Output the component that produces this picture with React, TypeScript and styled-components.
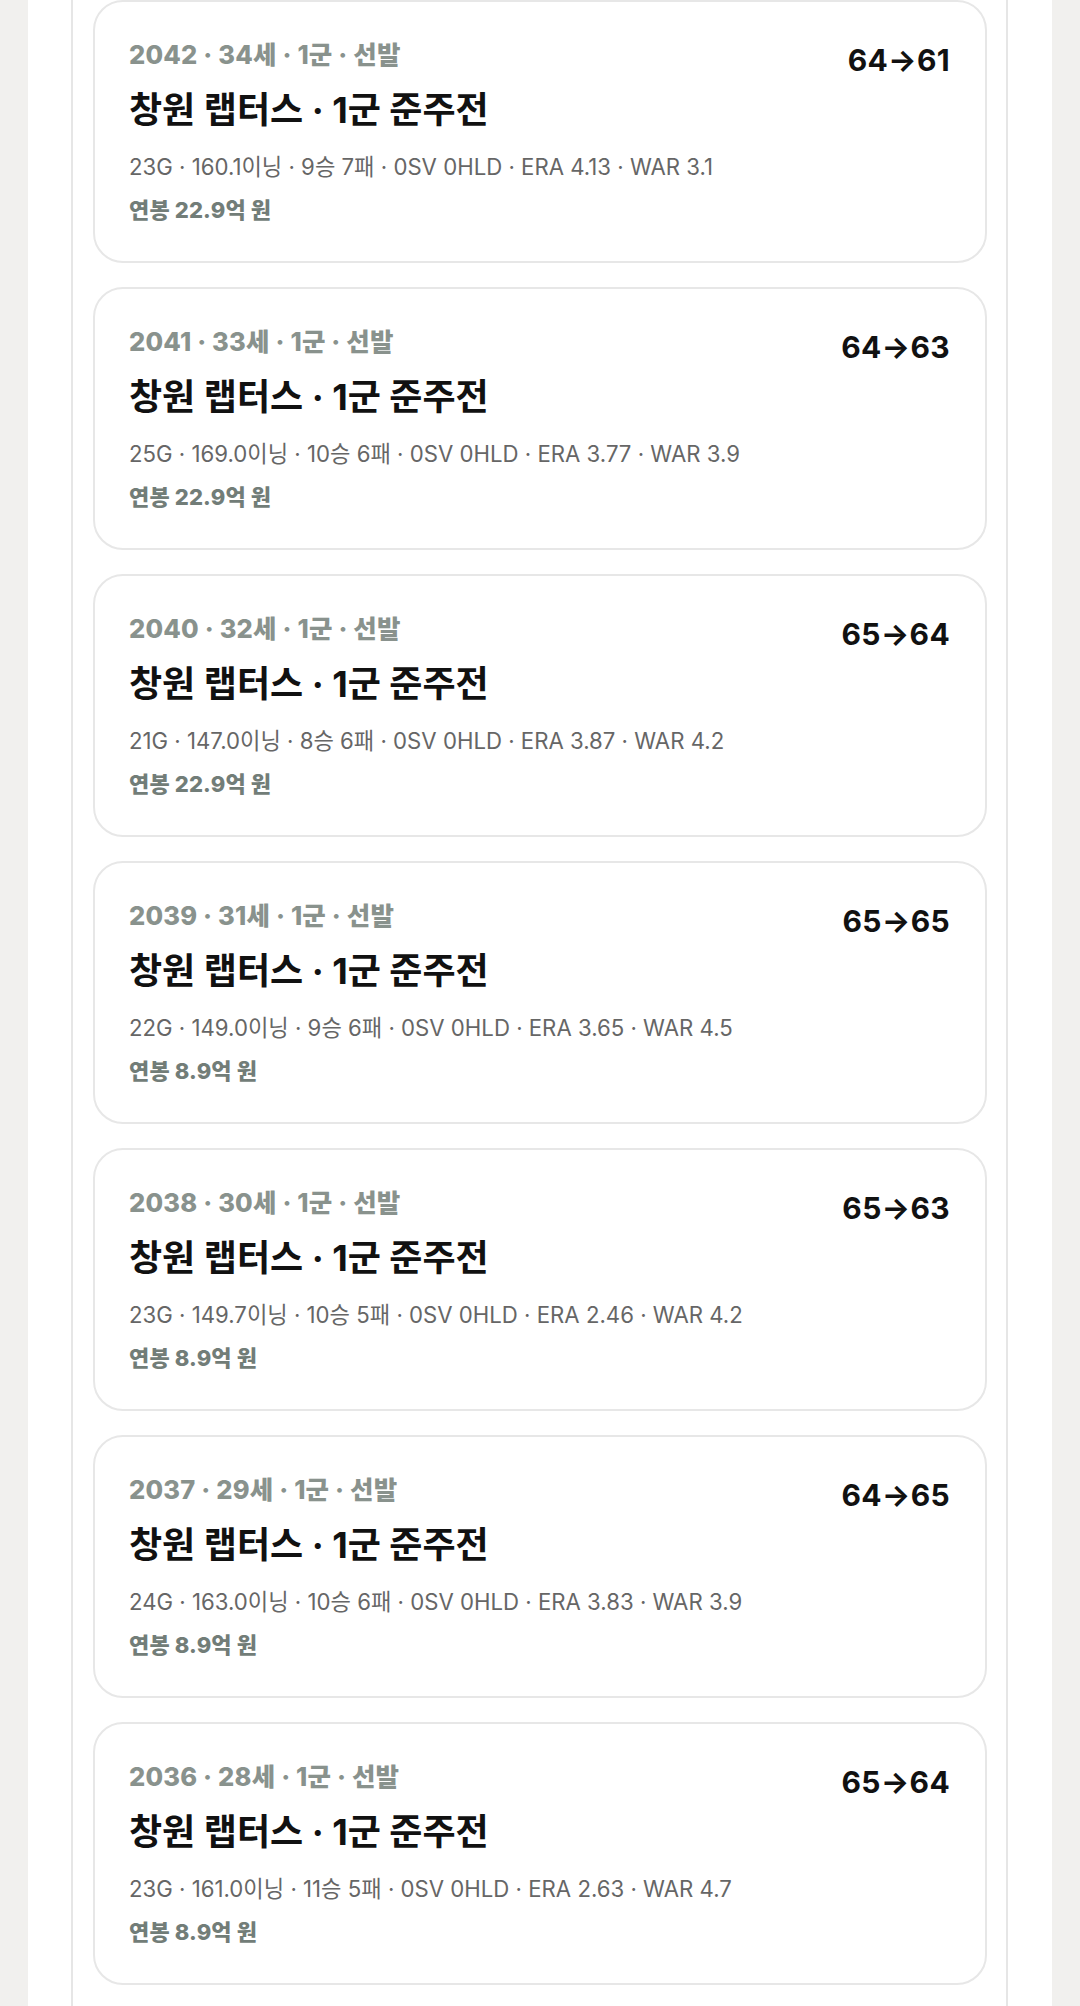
import styled, { createGlobalStyle } from "styled-components";

interface Season {
  year: number;
  age: number;
  ovr: string;
  games: number;
  innings: string;
  wins: number;
  losses: number;
  era: string;
  war: string;
  salary: string;
}

const seasons: Season[] = [
  { year: 2042, age: 34, ovr: "64→61", games: 23, innings: "160.1", wins: 9, losses: 7, era: "4.13", war: "3.1", salary: "22.9" },
  { year: 2041, age: 33, ovr: "64→63", games: 25, innings: "169.0", wins: 10, losses: 6, era: "3.77", war: "3.9", salary: "22.9" },
  { year: 2040, age: 32, ovr: "65→64", games: 21, innings: "147.0", wins: 8, losses: 6, era: "3.87", war: "4.2", salary: "22.9" },
  { year: 2039, age: 31, ovr: "65→65", games: 22, innings: "149.0", wins: 9, losses: 6, era: "3.65", war: "4.5", salary: "8.9" },
  { year: 2038, age: 30, ovr: "65→63", games: 23, innings: "149.7", wins: 10, losses: 5, era: "2.46", war: "4.2", salary: "8.9" },
  { year: 2037, age: 29, ovr: "64→65", games: 24, innings: "163.0", wins: 10, losses: 6, era: "3.83", war: "3.9", salary: "8.9" },
  { year: 2036, age: 28, ovr: "65→64", games: 23, innings: "161.0", wins: 11, losses: 5, era: "2.63", war: "4.7", salary: "8.9" },
];

const GlobalStyle = createGlobalStyle`
  html, body {
    margin: 0;
    padding: 0;
    background: #f1f0ee;
    font-family: Inter, "Noto Sans CJK KR", sans-serif;
  }
`;

const Column = styled.main`
  width: 1024px;
  min-height: 100vh;
  margin: 0 auto;
  background: #fff;
  padding: 0 44px 0 43px;
  box-sizing: border-box;
`;

const Section = styled.section`
  border-left: 2px solid #e6e6e6;
  border-right: 2px solid #e6e6e6;
  padding: 0 19px 40px 20px;
  display: flex;
  flex-direction: column;
  gap: 24px;
`;

const Card = styled.article`
  border: 2px solid #e7e7e7;
  border-radius: 30px;
  height: 263px;
  box-sizing: border-box;
  padding: 38px 35px 0 34px;
  display: grid;
  grid-template-columns: 1fr auto;
  column-gap: 20px;
`;

const Info = styled.div`
  display: flex;
  flex-direction: column;
`;

const Meta = styled.div`
  font-size: 25.5px;
  font-weight: 800;
  line-height: 30px;
  color: #89928d;
  letter-spacing: 0.2px;
`;

const Title = styled.h3`
  margin: 16px 0 0;
  font-size: 36px;
  font-weight: 700;
  line-height: 48px;
  color: #111;
  letter-spacing: 0;
`;

const Stats = styled.div`
  margin-top: 17px;
  font-size: 22.2px;
  font-weight: 400;
  line-height: 32px;
  color: #666;
  letter-spacing: 0;
`;

const Salary = styled.div`
  margin-top: 12px;
  font-size: 22px;
  font-weight: 800;
  line-height: 30px;
  color: #727d78;
  letter-spacing: 0.15px;
`;

const Ovr = styled.div`
  font-size: 30px;
  font-weight: 700;
  line-height: 40px;
  color: #111;
  letter-spacing: 0.3px;
`;

export default function App() {
  return (
    <>
      <GlobalStyle />
      <Column>
        <Section>
          {seasons.map((s) => (
            <Card key={s.year}>
              <Info>
                <Meta>
                  {s.year} · {s.age}세 · 1군 · 선발
                </Meta>
                <Title>창원 랩터스 · 1군 준주전</Title>
                <Stats>
                  {s.games}G · {s.innings}이닝 · {s.wins}승 {s.losses}패 · 0SV 0HLD · ERA {s.era} · WAR {s.war}
                </Stats>
                <Salary>연봉 {s.salary}억 원</Salary>
              </Info>
              <Ovr>{s.ovr}</Ovr>
            </Card>
          ))}
        </Section>
      </Column>
    </>
  );
}
